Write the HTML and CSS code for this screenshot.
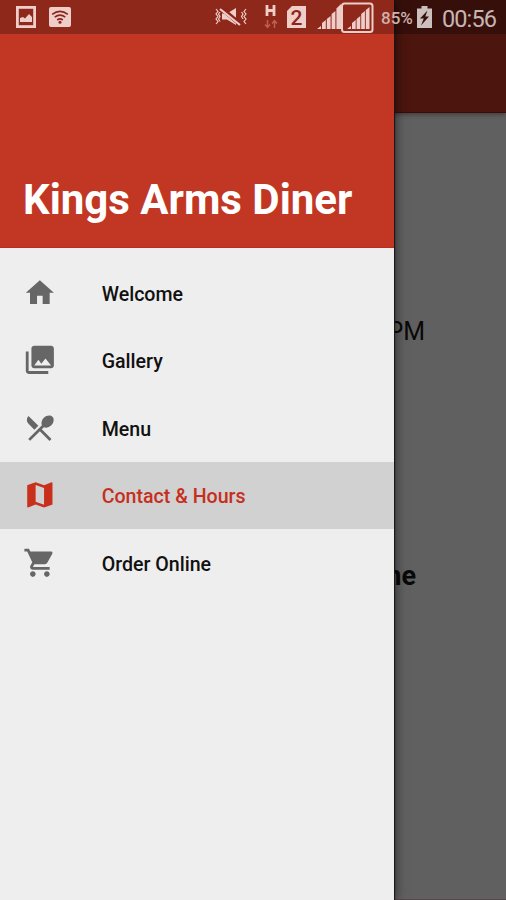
FILE: index.html
```
<!DOCTYPE html>
<html lang="en">
<head>
    <meta charset="UTF-8">
    <meta name="viewport" content="width=device-width, initial-scale=1.0">
    <title>Kings Arms Diner</title>
    <link rel="stylesheet" href="styles.css">
</head>
<body>
    <div class="page">
        <div class="toolbar"></div>
        <div class="content">
            <p class="hours">PM</p>
            <p class="phone">ne</p>
        </div>
    </div>

    <nav class="drawer">
        <div class="drawer-header">
            <h1>Kings Arms Diner</h1>
        </div>
        <ul class="menu">
            <li class="menu-item">
                <svg class="icon" viewBox="0 0 24 24"><path d="M10 20v-6h4v6h5v-8h3L12 3 2 12h3v8z"/></svg>
                <span>Welcome</span>
            </li>
            <li class="menu-item">
                <svg class="icon" viewBox="0 0 24 24"><path d="M22 16V4c0-1.1-.9-2-2-2H8c-1.1 0-2 .9-2 2v12c0 1.1.9 2 2 2h12c1.1 0 2-.9 2-2zm-11-4l2.030 2.710L16 11l4 5H8l3-4zM2 6v14c0 1.100.9 2 2 2h14v-2H4V6H2z"/></svg>
                <span>Gallery</span>
            </li>
            <li class="menu-item">
                <svg class="icon" viewBox="0 0 24 24"><path d="M8.100 13.340l2.830-2.830L3.910 3.500c-1.560 1.560-1.560 4.090 0 5.660l4.190 4.180zm6.780-1.810c1.530.71 3.680.21 5.270-1.380 1.910-1.910 2.280-4.650.81-6.120-1.460-1.460-4.200-1.100-6.120.81-1.590 1.590-2.090 3.740-1.380 5.270L3.700 19.870l1.410 1.410L12 14.410l6.880 6.880 1.410-1.410L13.410 13l1.470-1.470z"/></svg>
                <span>Menu</span>
            </li>
            <li class="menu-item active">
                <svg class="icon" viewBox="0 0 24 24"><path d="M20.500 3l-.16.030L15 5.100 9 3 3.360 4.900c-.21.070-.36.250-.36.480V20.500c0 .28.220.5.500.5l.16-.03L9 18.900l6 2.100 5.640-1.900c.21-.07.36-.25.36-.48V3.500c0-.28-.22-.5-.5-.5zM15 19l-6-2.110V5l6 2.110V19z"/></svg>
                <span>Contact &amp; Hours</span>
            </li>
            <li class="menu-item">
                <svg class="icon" viewBox="0 0 24 24"><path d="M7 18c-1.100 0-1.990.9-1.990 2S5.900 22 7 22s2-.9 2-2-.9-2-2-2zM1 2v2h2l3.600 7.590-1.350 2.450c-.16.280-.25.610-.25.960 0 1.100.9 2 2 2h12v-2H7.420c-.14 0-.25-.11-.25-.25l.03-.12.900-1.630h7.450c.75 0 1.410-.41 1.750-1.030l3.580-6.490c.08-.14.120-.31.120-.48 0-.55-.45-1-1-1H5.210l-.94-2H1zm16 16c-1.100 0-1.990.9-1.990 2s.89 2 1.990 2 2-.9 2-2-.9-2-2-2z"/></svg>
                <span>Order Online</span>
            </li>
        </ul>
    </nav>

    <div class="status-bar">
        <!-- screenshot saved -->
        <svg class="st-picture" width="20" height="22" viewBox="0 0 20 22">
            <rect x="1.400" y="1.400" width="17.200" height="19.200" fill="none" stroke="currentColor" stroke-width="2.800"/>
            <path d="M4 16v-4l3-1 2 1.500 4-4.500 3 3v5z" fill="currentColor"/>
        </svg>
        <!-- wifi -->
        <svg class="st-wifi" width="22" height="20" viewBox="0 0 22 20">
            <rect width="22" height="20" rx="2" fill="currentColor"/>
            <g fill="none" stroke="#8d251a" stroke-width="1.700">
                <path d="M3.200 7.300q7.800-6 15.600 0M5.700 10.200q5.300-4.200 10.600 0M8.200 13q2.800-2.200 5.600 0"/>
            </g>
            <circle cx="11" cy="15.300" r="1.500" fill="#8d251a"/>
        </svg>
        <!-- vibrate / muted -->
        <svg class="st-mute" width="34" height="22" viewBox="0 0 34 22">
            <path d="M8 7.500h5L22 2v17l-9-5.500H8z" fill="currentColor"/>
            <path d="M7.500 2.500l19 16" stroke="#8d251a" stroke-width="4.500"/>
            <path d="M6 3l20 16" stroke="currentColor" stroke-width="2.200"/>
            <path d="M2 3l2 2.500-2 2.500 2 2.500-2 2.500 2 2.500-2 2.500M6 6l-1.500 2L6 10.500 4.500 13 6 15.500M32 3l-2 2.500 2 2.500-2 2.500 2 2.500-2 2.500 2 2.500M27.500 6l1.500 2-1.500 2.500 1.500 2.500" fill="none" stroke="currentColor" stroke-width="1.200"/>
        </svg>
        <!-- mobile data -->
        <svg class="st-data" width="14" height="24" viewBox="0 0 14 24">
            <path d="M3 0v11M10 0v11M3 5.500h7" fill="none" stroke="currentColor" stroke-width="2.800"/>
            <path d="M3.500 15v7M1 19.500l2.500 2.800L6 19.500M10.500 23v-7M8 18.500l2.500-2.800 2.500 2.800" fill="none" stroke="#bd604f" stroke-width="1.500"/>
        </svg>
        <!-- sim 2 -->
        <span class="st-sim">2</span>
        <!-- signal for both sims -->
        <svg class="st-signal" width="57" height="31" viewBox="0 0 57 31">
            <g fill="currentColor">
                <path d="M0 27l4-3v3zM5 27v-6l3.800-3v9zM9.800 27V17l3.800-3v13zM14.600 27V12l3.800-3v18zM19.400 27V6.500L24 2v25z"/>
                <path d="M30 27l4-3v3zM35 27v-6l3.700-3v9zM39.600 27V17l3.700-3v13zM44.200 27V12l3.700-3v18zM48.800 27V8l3.700-3v22z"/>
            </g>
            <rect x="25" y="1.500" width="30.500" height="28.500" rx="2.500" fill="none" stroke="currentColor" stroke-width="2"/>
        </svg>
        <span class="st-percent">85%</span>
        <!-- charging -->
        <svg class="st-battery" width="15" height="22" viewBox="0 0 15 22">
            <path d="M4.500 0h6v2.500H15V22H0V2.500h4.500z" fill="currentColor"/>
            <path d="M10.500 4.500L3 12.500h3.800L4 19.500l8-9H8.300z" fill="#35100b"/>
        </svg>
        <span class="st-clock">00:56</span>
    </div>
</body>
</html>
```
FILE: styles.css
```
* {
    box-sizing: border-box;
}

body {
    margin: 0;
    height: 900px;
    overflow: hidden;
    font-family: Roboto, sans-serif;
    background-color: #606060;
}

/* page under the drawer, already dimmed */
.page {
    height: 900px;
    background-color: #606060;
    border-bottom: 1px solid #59474e;
}

.toolbar {
    height: 113px;
    background-color: #4c150e;
    border-bottom: 1px solid #3d0a05;
    box-shadow: 0 1px 5px rgba(0, 0, 0, 0.45);
}

.content {
    padding-top: 204px;
    color: #090909;
    text-align: right;
}

.content p {
    margin: 0;
    line-height: 30px;
}

.hours {
    padding-right: 81px;
    font-size: 25px;
}

.content .phone {
    margin-top: 214px;
    padding-right: 90px;
    font-size: 27px;
    font-weight: bold;
}

/* drawer lies over the page */
.drawer {
    position: absolute;
    top: 0;
    left: 0;
    width: 394px;
    height: 900px;
    background-color: #eeeeee;
    box-shadow: 1px 0 1px #181818, 2px 0 10px rgba(0, 0, 0, 0.5);
}

.drawer-header {
    display: flex;
    align-items: flex-end;
    height: 248px;
    padding: 0 22px 23px 23px;
    background-color: #c23724;
    border-bottom: 1px solid #b92f1c;
}

.drawer-header h1 {
    margin: 0;
    font-size: 42px;
    line-height: 49px;
    font-weight: bold;
    color: #fff;
    white-space: nowrap;
}

.menu {
    list-style: none;
    margin: 0;
    padding: 11px 0 0;
}

.menu-item {
    display: flex;
    align-items: center;
    gap: 45px;
    height: 67.5px;
    padding-left: 23px;
    font-size: 19.6px;
    font-weight: 500;
    color: #111;
}

.menu-item span {
    padding-top: 3px;
}

.icon {
    width: 33.7px;
    height: 33.7px;
    fill: #666;
}

.menu-item.active {
    background-color: #d1d1d1;
    color: #c62f1d;
}

.menu-item.active .icon {
    fill: #c8301c;
}

/* status bar lies over both */
.status-bar {
    position: absolute;
    top: 0;
    left: 0;
    display: flex;
    align-items: center;
    width: 506px;
    height: 34px;
    padding-left: 16px;
    background-color: rgba(0, 0, 0, 0.27);
    color: #efcdc8;
}

.status-bar svg {
    flex: none;
}

.st-wifi {
    margin-left: 13px;
}

.st-mute {
    margin-left: 143px;
}

.st-data {
    margin-left: 16px;
    margin-top: -1px;
}

.st-sim {
    width: 19px;
    height: 22px;
    margin-left: 9px;
    background-color: #efcdc8;
    clip-path: polygon(5px 0, 100% 0, 100% 100%, 0 100%, 0 5px);
    color: #8d251a;
    font-size: 21px;
    line-height: 24px;
    font-weight: 500;
    text-align: center;
}

.st-signal {
    margin-left: 11px;
}

.st-percent {
    width: 36px;
    margin-left: 7px;
    margin-top: 2px;
    font-size: 17px;
    font-weight: 500;
    color: #cdb1ad;
}

.st-battery {
    color: #cbc0be;
}

.st-clock {
    margin-left: 10px;
    margin-top: 3px;
    font-size: 23.500px;
    letter-spacing: -0.9px;
    color: #c5b5b3;
}
```
